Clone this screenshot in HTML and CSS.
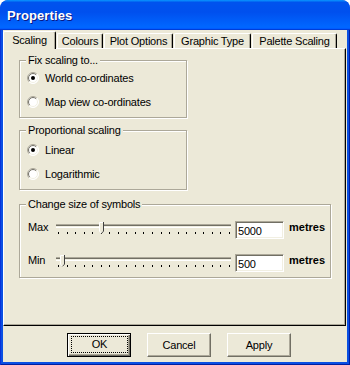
FILE: index.html
```html
<!DOCTYPE html>
<html>
<head>
<meta charset="utf-8">
<title>Properties</title>
<link rel="stylesheet" href="styles.css">
</head>
<body>
<svg class="defs" width="0" height="0" aria-hidden="true">
  <defs>
    <symbol id="radio" viewBox="0 0 12 12">
      <circle cx="6" cy="6" r="5.5" fill="#fff"/>
      <path d="M2.11 9.89 A5.5 5.5 0 0 1 9.89 2.11" fill="none" stroke="#ACA899"/>
      <path d="M2.82 9.18 A4 4 0 0 1 9.18 2.82" fill="none" stroke="#716F64"/>
      <path d="M9.89 2.11 A5.5 5.5 0 0 1 2.11 9.89" fill="none" stroke="#fff"/>
      <path d="M9.18 2.82 A4 4 0 0 1 2.82 9.18" fill="none" stroke="#F1EFE2"/>
    </symbol>
    <symbol id="dot" viewBox="0 0 12 12">
      <circle cx="6" cy="6" r="2" fill="#000"/>
    </symbol>
    <symbol id="thumb" viewBox="0 0 5 12">
      <path d="M0 0H5V9L2.5 11.5L0 9Z" fill="#ECE9D8"/>
      <path d="M0.5 9.2V0.5H4" fill="none" stroke="#fff"/>
      <path d="M4.5 0V9.2L2.5 11.3" fill="none" stroke="#404040"/>
      <path d="M0.5 9.2L2.3 11" fill="none" stroke="#fff"/>
    </symbol>
  </defs>
</svg>

<div class="window">
  <div class="titlebar"><span class="title">Properties</span></div>
  <div class="frame">
    <div class="client">
      <div class="tabs">
        <div class="tab active w-scaling">Scaling</div>
        <div class="tab w-colours">Colours</div>
        <div class="tab w-plot">Plot Options</div>
        <div class="tab w-graphic">Graphic Type</div>
        <div class="tab w-palette">Palette Scaling</div>
      </div>

      <div class="page">
        <fieldset class="group g-fix">
          <legend>Fix scaling to...</legend>
          <div class="radios">
            <div class="radio-row">
              <svg class="radio" width="12" height="12"><use href="#radio"/><use href="#dot"/></svg>
              <span>World co-ordinates</span>
            </div>
            <div class="radio-row">
              <svg class="radio" width="12" height="12"><use href="#radio"/></svg>
              <span>Map view co-ordinates</span>
            </div>
          </div>
        </fieldset>

        <fieldset class="group g-prop">
          <legend>Proportional scaling</legend>
          <div class="radios">
            <div class="radio-row">
              <svg class="radio" width="12" height="12"><use href="#radio"/><use href="#dot"/></svg>
              <span>Linear</span>
            </div>
            <div class="radio-row">
              <svg class="radio" width="12" height="12"><use href="#radio"/></svg>
              <span>Logarithmic</span>
            </div>
          </div>
        </fieldset>

        <fieldset class="group g-size">
          <legend>Change size of symbols</legend>
          <div class="sliders">
            <div class="slider-row">
              <span class="slabel">Max</span>
              <div class="slider">
                <div class="track"></div>
                <div class="ticks">
                  <i></i><i></i><i></i><i></i><i></i><i></i><i></i><i></i><i></i><i></i><i></i><i></i><i></i><i></i><i></i><i></i><i></i><i></i><i></i><i></i><i></i>
                </div>
                <svg class="thumb" width="5" height="12" style="left:43px"><use href="#thumb"/></svg>
              </div>
              <div class="field">5000</div>
              <span class="unit">metres</span>
            </div>
            <div class="slider-row">
              <span class="slabel">Min</span>
              <div class="slider">
                <div class="track"></div>
                <div class="ticks">
                  <i></i><i></i><i></i><i></i><i></i><i></i><i></i><i></i><i></i><i></i><i></i><i></i><i></i><i></i><i></i><i></i><i></i><i></i><i></i><i></i><i></i>
                </div>
                <svg class="thumb" width="5" height="12" style="left:4px"><use href="#thumb"/></svg>
              </div>
              <div class="field">500</div>
              <span class="unit">metres</span>
            </div>
          </div>
        </fieldset>
      </div>

      <div class="buttons">
        <div class="btn default"><span class="focus">OK</span></div>
        <div class="btn">Cancel</div>
        <div class="btn">Apply</div>
      </div>
    </div>
  </div>
</div>
</body>
</html>
```

FILE: styles.css
```css
* { box-sizing: border-box; }

html, body {
  margin: 0;
  padding: 0;
}

body {
  width: 350px;
  height: 365px;
  background: #fff;
  font-family: "Liberation Sans", Arial, sans-serif;
  font-size: 11px;
  letter-spacing: -0.2px;
  color: #000;
}

.defs {
  position: absolute;
  width: 0;
  height: 0;
  overflow: hidden;
}

.window {
  width: 350px;
  height: 365px;
  display: flex;
  flex-direction: column;
  border-radius: 8px 8px 0 0;
  overflow: hidden;
  background: #0A4FE3;
}

.titlebar {
  height: 30px;
  flex: none;
  padding: 8px 0 0 7px;
  background: linear-gradient(180deg, #0997ff, #0053ee 8%, #0050ee 40%, #0066ff 88%, #0066ff 93%, #005bff 95%, #003dd7 96%, #003dd7);
  border-radius: 8px 8px 0 0;
}

.title {
  color: #fff;
  font-weight: bold;
  font-size: 13px;
  letter-spacing: 0.1px;
  line-height: 15px;
  text-shadow: 1px 1px 0 #0a1883;
}

.frame {
  flex: 1;
  display: flex;
  padding: 0 3px 3px;
  background: #0A4FE3;
  box-shadow: inset 1px 0 0 #0831D9, inset -1px 0 0 #001EA0, inset 0 -1px 0 #001EA0;
}

.client {
  flex: 1;
  display: flex;
  flex-direction: column;
  background: #ECE9D8;
}

/* Tabs */
.tabs {
  height: 18px;
  flex: none;
  display: flex;
  align-items: flex-end;
}

.tab {
  height: 15px;
  margin-right: 1px;
  padding-top: 1px;
  line-height: 13px;
  text-align: center;
  border-top: 1px solid #fff;
  border-left: 1px solid #fff;
  border-right: 1px solid #000;
  border-radius: 2px 2px 0 0;
  box-shadow: inset -1px 0 0 #ACA899;
  white-space: nowrap;
}

.tab.active {
  position: relative;
  z-index: 1;
  height: 18px;
  margin-bottom: -1px;
  padding-top: 2px;
  background: #ECE9D8;
}

.w-scaling { width: 53px; }
.w-colours { width: 46px; }
.w-plot { width: 69px; }
.w-graphic { width: 77px; }
.w-palette { width: 85px; }

/* Page */
.page {
  height: 278px;
  flex: none;
  margin-right: 1px;
  padding: 5px 0 0 15px;
  border-top: 1px solid #fff;
  border-left: 1px solid #fff;
  border-right: 1px solid #000;
  border-bottom: 1px solid #000;
  box-shadow: inset -1px -1px 0 #ACA899;
}

.group {
  margin: 0;
  min-width: 0;
  border: 1px solid #ACA899;
  box-shadow: inset 1px 1px 0 #fff, 1px 1px 0 #fff;
  padding-left: 0;
  padding-right: 0;
}

.group legend {
  margin-left: 6px;
  padding: 0 2px;
  line-height: 13px;
  background: #ECE9D8;
}

.g-fix {
  width: 168px;
  padding-top: 3px;
  padding-bottom: 7px;
}

.g-prop {
  width: 168px;
  margin-top: 6px;
  padding-top: 5px;
  padding-bottom: 7px;
}

.g-size {
  width: 312px;
  margin-top: 8px;
  padding-top: 10px;
  padding-bottom: 5px;
}

.radios {
  display: flex;
  flex-direction: column;
  gap: 8px;
}

.radio-row {
  height: 16px;
  display: flex;
  align-items: center;
  gap: 6px;
  padding-left: 7px;
  line-height: 13px;
}

.radio {
  display: block;
  flex: none;
}

/* Sliders */
.sliders {
  display: flex;
  flex-direction: column;
  gap: 15px;
}

.slider-row {
  height: 18px;
  display: flex;
  align-items: flex-start;
  padding-left: 8px;
  line-height: 13px;
}

.slabel {
  width: 28px;
  flex: none;
}

.slider {
  position: relative;
  width: 175px;
  height: 18px;
  flex: none;
}

.track {
  margin-top: 3px;
  height: 4px;
  border-top: 1px solid #ACA899;
  border-bottom: 1px solid #fff;
  background: linear-gradient(#716F64 0 1px, #F1EFE2 1px);
}

.ticks {
  margin: 4px 1px 0 2px;
  display: flex;
  justify-content: space-between;
}

.ticks i {
  display: block;
  width: 1px;
  height: 2px;
  background: #000;
}

.thumb {
  position: absolute;
  top: 1px;
  display: block;
}

.field {
  width: 49px;
  height: 18px;
  flex: none;
  margin-left: 4px;
  padding: 1px 0 0 2px;
  line-height: 16px;
  background: #fff;
  border: 1px solid;
  border-color: #ACA899 #fff #fff #ACA899;
  box-shadow: inset 1px 1px 0 #716F64, inset -1px -1px 0 #F1EFE2;
}

.unit {
  margin-left: 5px;
  font-weight: bold;
  letter-spacing: 0;
}

/* Buttons */
.buttons {
  flex: 1;
  display: flex;
  align-items: flex-start;
  gap: 16px;
  padding: 7px 0 0 64px;
}

.btn {
  width: 64px;
  height: 24px;
  display: flex;
  align-items: center;
  justify-content: center;
  line-height: 13px;
  background: #ECE9D8;
  border: 1px solid;
  border-color: #fff #716F64 #716F64 #fff;
  box-shadow: inset -1px -1px 0 #ACA899;
}

.btn.default {
  border-color: #000;
  box-shadow: inset 1px 1px 0 #fff, inset -1px -1px 0 #716F64, inset -2px -2px 0 #ACA899;
  align-items: stretch;
  justify-content: stretch;
}

.focus {
  flex: 1;
  margin: 2px 2px 3px 3px;
  border: 1px dotted #000;
  display: flex;
  align-items: center;
  justify-content: center;
}
```
